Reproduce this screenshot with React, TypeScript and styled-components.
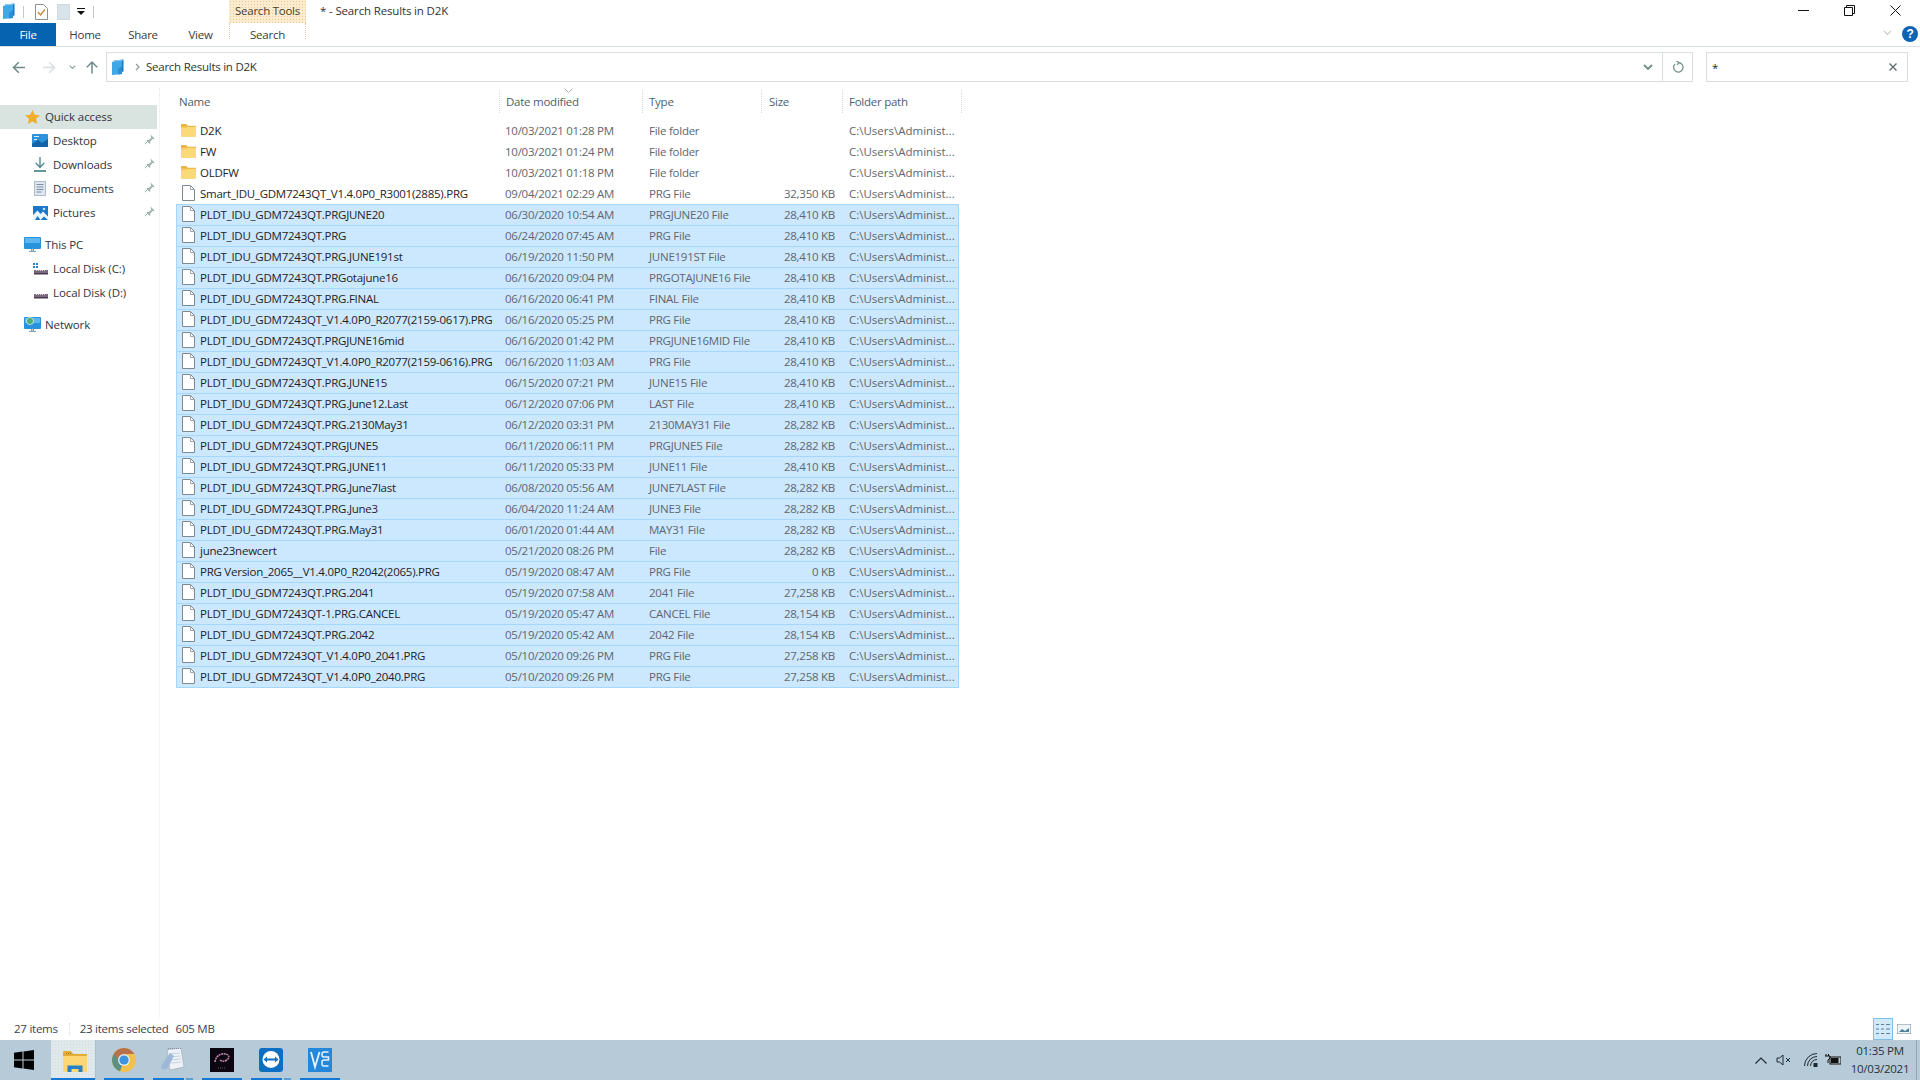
import React from 'react';
import styled, { createGlobalStyle } from 'styled-components';

const Global = createGlobalStyle`
  html, body { margin: 0; padding: 0; height: 100%; background: #fff; overflow: hidden; }
  #root { height: 100%; }
  * { box-sizing: border-box; }
`;

const Page = styled.div`
  width: 1920px; height: 1080px; display: flex; flex-direction: column;
  font-family: "Open Sans", "Noto Sans", sans-serif; font-size: 11.5px; color: #2a2a2a; background: #fff;
  letter-spacing: -0.25px;
`;
const TitleBar = styled.div`display: flex; align-items: stretch; height: 23px;`;
const QuickBar = styled.div`width: 229px; display: flex; align-items: center; padding-left: 2px;`;
const QuickSlot = styled.span<{ $w: number }>`width: ${p => p.$w}px; display: flex; justify-content: center; align-items: center; flex: none;`;
const QuickSep = styled.span<{ $l: number; $r: number }>`width: 1px; height: 12px; background: #c4c8ca; flex: none; margin: 0 ${p => p.$r}px 0 ${p => p.$l}px;`;
const ContextLabel = styled.div`
  width: 77px; display: flex; align-items: center; justify-content: center; color: #4a4030; padding-bottom: 3px;
  background: #fbeccf; background-image: radial-gradient(#eac88f 0.7px, transparent 0.8px); background-size: 3px 3px;
`;
const WindowTitle = styled.div`flex: 1; padding-left: 14px; display: flex; align-items: center; padding-bottom: 2px; color: #333; letter-spacing: -0.15px;`;
const WinControls = styled.div`display: flex; padding-right: 2px;`;
const WinBtn = styled.span`width: 46px; display: flex; align-items: center; justify-content: center; padding-bottom: 3px;`;

const Ribbon = styled.div`display: flex; height: 24px; border-bottom: 1px solid #d9e1e3; align-items: stretch;`;
const FileTab = styled.div`width: 56px; height: 23px; background: #0563b0; color: #fff; display: flex; align-items: center; justify-content: center;`;
const RibbonTab = styled.div<{ $w: number }>`width: ${p => p.$w}px; height: 23px; display: flex; align-items: center; justify-content: center; color: #3b3b3b;`;
const SearchTab = styled(RibbonTab)`height: 16px; padding-top: 6px; border-left: 1px dotted #d8c8a8; border-right: 1px dotted #d8c8a8;`;
const RibbonFill = styled.div`flex: 1; display: flex; align-items: center; justify-content: flex-end; padding-right: 2px; gap: 10px; margin-top: -2px;`;

const NavRow = styled.div`display: flex; height: 41px; align-items: center; padding-right: 12px; padding-bottom: 1px;`;
const NavBtns = styled.div`width: 106px; display: flex; align-items: center; flex: none;`;
const NavSlot = styled.span<{ $w: number }>`width: ${p => p.$w}px; display: flex; justify-content: center; flex: none;`;
const AddressBox = styled.div`flex: 1; height: 30px; border: 1px solid #d9dfe0; display: flex; align-items: center; margin-right: 13px;`;
const AddressIcon = styled.span`width: 21px; display: flex; justify-content: center; flex: none;`;
const Crumb = styled.span`width: 18px; display: flex; justify-content: center; flex: none;`;
const AddressText = styled.span`flex: 1; padding-bottom: 1px; color: #333;`;
const AddressEnd = styled.span`width: 28px; height: 100%; display: flex; align-items: center; justify-content: center; flex: none;`;
const RefreshBtn = styled(AddressEnd)`width: 30px; border-left: 1px solid #d9dfe0;`;
const SearchBox = styled.div`width: 202px; height: 30px; border: 1px solid #d9dfe0; display: flex; align-items: center; justify-content: space-between; padding: 0 10px 0 5px; flex: none;`;

const Body = styled.div`flex: 1; display: flex; min-height: 0;`;
const Sidebar = styled.nav`width: 160px; flex: none; padding-top: 17px; padding-right: 2px; border-right: 1px dotted #e6e8ea; letter-spacing: -0.1px;`;
const NavItem = styled.div<{ $indent: number; $active?: boolean; $gap?: number }>`
  height: 24px; display: flex; align-items: center; padding-left: ${p => p.$indent}px; padding-bottom: 1px; position: relative;
  background: ${p => (p.$active ? '#d9e3e0' : 'transparent')}; margin-top: ${p => p.$gap ?? 0}px; color: #30343a;
`;
const NavIcon = styled.span`width: 20px; margin-right: 3px; display: flex; justify-content: center; flex: none;`;
const PinMark = styled.span`position: absolute; right: 2px; top: 5px; display: flex;`;

const List = styled.main`flex: 1; padding-left: 16px; padding-top: 2px;`;
const HeaderRow = styled.div`display: grid; grid-template-columns: 324px 143px 119px 81px 119px; width: 786px; height: 23px; margin-bottom: 7px;`;
const HeaderCell = styled.div`display: flex; align-items: center; padding-left: 6px; color: #4c6070; border-right: 1px dotted #d4d8dc; position: relative; padding-bottom: 1px;`;
const NameHead = styled(HeaderCell)`padding-left: 3px;`;
const SizeHead = styled(HeaderCell)`padding-left: 7px;`;
const SortArrow = styled.span`position: absolute; top: -2px; left: 64px; display: flex;`;
const Row = styled.div<{ $selected?: boolean }>`
  display: grid; grid-template-columns: 324px 143px 119px 81px 114px; width: 783px; height: 22px; margin-bottom: -1px;
  border: 1px solid ${p => (p.$selected ? '#a5d6fc' : 'transparent')}; padding-bottom: 2px;
  background: ${p => (p.$selected ? '#cce8ff' : 'transparent')}; align-items: center; color: #5f666e;
`;
const NameCell = styled.div`display: flex; align-items: center; color: #1e2228; padding-left: 4px; white-space: nowrap;`;
const RowIcon = styled.span`width: 15px; margin-right: 4px; display: flex; justify-content: center; flex: none;`;
const Cell = styled.div`padding-left: 5px; white-space: nowrap; overflow: hidden;`;
const DateCell = styled(Cell)`padding-left: 4px;`;
const PathCell = styled(Cell)`letter-spacing: 0;`;
const SizeCell = styled.div`text-align: right; padding-right: 9px; white-space: nowrap;`;

const StatusBar = styled.footer`height: 22px; display: flex; align-items: center; padding-left: 14px; color: #3a4250; flex: none;`;
const StatusPart = styled.span`display: inline-block; padding-bottom: 2px;`;
const StatusSize = styled(StatusPart)`margin-left: 7px;`;
const StatusDivider = styled.span`width: 1px; height: 12px; border-left: 1px dotted #d8dce0; margin: 0 10px 0 11px;`;
const ViewToggles = styled.div`margin-left: auto; display: flex; align-items: stretch; height: 22px; padding-right: 6px; gap: 1px;`;
const ViewBtn = styled.span<{ $on?: boolean }>`
  width: 20px; display: flex; align-items: center; justify-content: center;
  background: ${p => (p.$on ? '#d3e9f8' : 'transparent')}; border: 1px solid ${p => (p.$on ? '#7fc0ea' : 'transparent')};
`;

const Taskbar = styled.div`height: 40px; flex: none; background: #b6cbd7; display: flex; align-items: stretch;`;
const StartBtn = styled.div`width: 51px; display: flex; align-items: center; justify-content: center; padding-right: 3px;`;
const ActiveTask = styled.div`
  width: 45px; margin-right: 8px; display: flex; align-items: center; justify-content: center; position: relative; padding-left: 3px; padding-top: 3px;
  background: #dfe9ec; background-image: radial-gradient(#cfdde2 0.7px, transparent 0.8px); background-size: 3px 3px;
  border-right: 1px solid #aebfc8;
`;
const TaskBtn = styled.div`width: 40px; margin-right: 9px; display: flex; align-items: center; justify-content: center; position: relative;`;
const TaskLine = styled.span<{ $split?: boolean }>`
  position: absolute; left: 0; right: 0; bottom: 0; height: 2px;
  background: ${p => (p.$split ? 'linear-gradient(90deg,#1378d6 0 78%,#b6cbd7 78% 82%,#5a9fd8 82%)' : '#1378d6')};
`;
const Tray = styled.div`margin-left: auto; display: flex; align-items: center; padding-right: 3px;`;
const TraySlot = styled.span<{ $w: number }>`width: ${p => p.$w}px; display: flex; justify-content: center; flex: none;`;
const Clock = styled.div`width: 68px; margin-left: 3px; text-align: center; line-height: 18px; color: #27323c; font-size: 11.5px;`;
const ShowDesktop = styled.span`width: 1px; align-self: stretch; background: #8fa6b3; margin-left: 2px;`;

const Library = ({ s = 16 }: { s?: number }) => (
  <svg width={s} height={s * 1.15} viewBox="0 0 14 16">
    <path d="M3 1.5 12.5.5v12L3 15z" fill="#1679c6" />
    <path d="M1 3 11 1.8V15L1 16z" fill="#3fa9e8" />
    <path d="M1 3 3 1.5 12.5.5 11 1.8z" fill="#8ed0f3" />
    <path d="M7 10l4-3v8l-4 .4z" fill="#2a8fd6" />
  </svg>
);
const Folder = () => (
  <svg width="16" height="14" viewBox="0 0 16 14">
    <path d="M0 1.5C0 1 .4.7 1 .7h4.4l1.8 1.8H15c.5 0 1 .4 1 1V13c0 .5-.4 1-1 1H1c-.5 0-1-.4-1-1z" fill="#e8b33e" />
    <path d="M0 3.6h16V13c0 .6-.4 1-1 1H1c-.6 0-1-.4-1-1z" fill="#fbd977" />
    <path d="M0 3.6h6.7L5.6 5H0z" fill="#f5c95b" />
  </svg>
);
const FileIcon = () => (
  <svg width="13" height="16" viewBox="0 0 13 16">
    <path d="M.5.5h8l4 4v11H.5z" fill="#fff" stroke="#7f8a90" />
    <path d="M8.5.5v4h4" fill="none" stroke="#9aa4aa" />
  </svg>
);
const Star = () => (
  <svg width="15" height="14" viewBox="0 0 15 14"><path d="M7.5 0l2.2 4.7 5.3.6-3.9 3.5 1 5.2-4.6-2.6L2.9 14l1-5.2L0 5.3l5.3-.6z" fill="#f1ae2c" /></svg>
);
const DesktopIcon = () => (
  <svg width="16" height="13" viewBox="0 0 16 13">
    <rect x="0" y="0" width="16" height="13" rx="1" fill="#2f93dc" />
    <path d="M0 10 6 6l4 3 6-4v7a1 1 0 0 1-1 1H1a1 1 0 0 1-1-1z" fill="#1363a8" />
    <path d="M2 2h5v1H2zM2 5h3v1H2z" fill="#d9f0ff" />
  </svg>
);
const DownloadIcon = () => (
  <svg width="14" height="15" viewBox="0 0 14 15" fill="none" stroke="#4f8a90" strokeWidth="1.4">
    <path d="M7 0v10M2.8 6 7 10.4 11.2 6" />
    <path d="M1 14h12" stroke="#3f7d88" strokeWidth="1.6" />
  </svg>
);
const DocsIcon = () => (
  <svg width="12" height="15" viewBox="0 0 12 15">
    <rect width="12" height="15" fill="#aebccd" />
    <rect x="1" y="1" width="10" height="13" fill="#dfe6ee" />
    <path d="M2.5 3.5h7M2.5 6h7M2.5 8.5h7M2.5 11h5" stroke="#7d8fa6" />
  </svg>
);
const PicturesIcon = () => (
  <svg width="15" height="14" viewBox="0 0 15 14">
    <rect width="15" height="14" fill="#1a76c9" />
    <path d="M0 14V9l4.5-4.500L7.500 8 10 5.500 15 10.500V14L11 10.500 7.500 14 4.500 10 2 14z" fill="#eaf4fb" />
    <circle cx="11" cy="3" r="1.3" fill="#bfe3fa" />
  </svg>
);
const PcIcon = ({ net }: { net?: boolean }) => (
  <svg width="17" height="16" viewBox="0 0 17 16">
    <rect x="0" y="0" width="17" height="12" rx="1" fill="#2a93dd" />
    <rect x="1" y="1" width="15" height="5" fill="#5cb7ee" />
    <path d="M7.5 12h2v2h-2zM5 14.5h7" stroke="#8aa0ad" fill="none" />
    {net && <circle cx="6" cy="4" r="3.6" fill="#4fae7a" stroke="#e8f3f8" strokeWidth=".7" />}
  </svg>
);
const DiskIcon = ({ win }: { win?: boolean }) => (
  <svg width="15" height="12" viewBox="0 0 15 12">
    {win && <path d="M0 0h2v2H0zM3 0h2v2H3zM0 3h2v2H0zM3 3h2v2H3z" fill="#1f84d6" />}
    <rect x="1" y="7" width="14" height="3.5" fill="#7b6a7e" />
    <rect x="1" y="10" width="14" height="1.5" fill="#4b3a52" />
    <path d="M3 7.5h9" stroke="#d8cfdb" strokeDasharray="1 1" />
  </svg>
);
const Pin = () => (
  <svg width="11" height="11" viewBox="0 0 11 11" fill="#9fb2ac">
    <path d="M6.5.5l4 4-1 .8-.9-.3-2.4 2.4.1 1.6-.8.8L2.5 6.800l.8-.8 1.6.1L7.300 3.700 7 2.800z" />
    <path d="M3.700 7.300.8 10.200" stroke="#9fb2ac" />
  </svg>
);
const Chevron = ({ w = 9, c = '#6f9088', sw = 1.6 }: { w?: number; c?: string; sw?: number }) => (
  <svg width={w} height={w * 0.7} viewBox="0 0 10 7" fill="none" stroke={c} strokeWidth={sw}><path d="M1 1l4 4 4-4" /></svg>
);
const ArrowSvg = styled.svg<{ $deg: number }>`transform: rotate(${p => p.$deg}deg);`;
const Arrow = ({ deg, c }: { deg: number; c: string }) => (
  <ArrowSvg $deg={deg} width="14" height="13" viewBox="0 0 14 13" fill="none" stroke={c} strokeWidth="1.5">
    <path d="M13 6.5H1.500M6.800 1.300 1.500 6.500l5.300 5.200" />
  </ArrowSvg>
);
const ExplorerIcon = () => (
  <svg width="24" height="21" viewBox="0 0 24 21">
    <path d="M0 1.500C0 .7.5 0 1.300 0h6.500l2.500 3H24v3H0z" fill="#e3ad35" />
    <path d="M3 2.500h6" stroke="#9e7420" strokeDasharray="1 1" />
    <path d="M0 5h24v15a1 1 0 0 1-1 1H1a1 1 0 0 1-1-1z" fill="#fcd773" />
    <path d="M4.500 21v-6.500h15V21h-4v-3h-7v3z" fill="#2a7fc9" />
  </svg>
);
const ChromeIcon = () => (
  <svg width="24" height="24" viewBox="0 0 24 24">
    <circle cx="12" cy="12" r="12" fill="#f1c04d" />
    <path d="M12 12 1.600 6A12 12 0 0 0 8 23.300z" fill="#5d8e82" />
    <path d="M12 0A12 12 0 0 0 1.600 6L7 12l5-6h10.400A12 12 0 0 0 12 0z" fill="#b9714d" />
    <circle cx="12" cy="12" r="6" fill="#dfe9ec" />
    <circle cx="12" cy="12" r="4.600" fill="#3f92dd" />
  </svg>
);
const NotepadIcon = () => (
  <svg width="24" height="24" viewBox="0 0 24 24">
    <path d="M6 1l14-1 3 19-14 3z" fill="#eef2f7" stroke="#9aa6b5" strokeWidth=".6" />
    <path d="M7 1l13-1" stroke="#7e8ea3" strokeWidth="1.5" strokeDasharray="1 1" />
    <path d="M8 6l11-1M8.500 9l11-1M9 12l11-1M9.500 15l11-1" stroke="#c5d2e2" />
    <path d="M0 18 9 5l4 3-7 13-5 .5z" fill="#9db8d8" />
  </svg>
);
const PuttyLike = () => (
  <svg width="24" height="24" viewBox="0 0 24 24">
    <rect width="24" height="24" fill="#0c0610" />
    <path d="M5 14C6 6 14 4 18 7c2 2 0 5-3 6-2 .5-4 0-5-1" fill="none" stroke="#c98ab2" strokeWidth="1.5" strokeDasharray="2 .6" />
    <path d="M8 20h8" stroke="#6d4a70" strokeDasharray="1 1" />
  </svg>
);
const TeamViewerIcon = () => (
  <svg width="24" height="24" viewBox="0 0 24 24">
    <rect width="24" height="24" rx="3" fill="#0d6fc4" />
    <circle cx="12" cy="11.5" r="8.5" fill="#fff" />
    <path d="M4.500 11.500l3.500-3v2h8v-2l3.500 3-3.500 3v-2H8v2z" fill="#0d6fc4" />
  </svg>
);
const VncIcon = () => (
  <svg width="24" height="24" viewBox="0 0 24 24">
    <rect width="24" height="24" fill="#2587d9" />
    <path d="M3 4l4 15 4.500-15" fill="none" stroke="#e8f4fd" strokeWidth="1.8" />
    <path d="M20.500 4H16a2 2 0 0 0-2 2v1a2 2 0 0 0 2 2h4.500v3H16a2 2 0 0 0-2 2v2a2 2 0 0 0 2 2h4.500" fill="none" stroke="#e8f4fd" strokeWidth="1.5" />
  </svg>
);
const WindowsLogo = () => (
  <svg width="20" height="20" viewBox="0 0 20 20" fill="#000">
    <path d="M0 2.800 8.500 1.600v8H0zM9.500 1.500 20 0v9.600H9.500zM0 10.500h8.500v8L0 17.200zM9.500 10.500H20V20L9.500 18.500z" />
  </svg>
);

type F = { n: string; d: string; t: string; s: string; k?: 'folder'; sel?: boolean };
const B = 'PLDT_IDU_GDM7243QT';
const sel = (n: string, d: string, t: string, s: string): F => ({ n, d, t, s, sel: true });
const files: F[] = [
  { n: 'D2K', d: '10/03/2021 01:28 PM', t: 'File folder', s: '', k: 'folder' },
  { n: 'FW', d: '10/03/2021 01:24 PM', t: 'File folder', s: '', k: 'folder' },
  { n: 'OLDFW', d: '10/03/2021 01:18 PM', t: 'File folder', s: '', k: 'folder' },
  { n: 'Smart_IDU_GDM7243QT_V1.4.0P0_R3001(2885).PRG', d: '09/04/2021 02:29 AM', t: 'PRG File', s: '32,350 KB' },
  sel(`${B}.PRGJUNE20`, '06/30/2020 10:54 AM', 'PRGJUNE20 File', '28,410 KB'),
  sel(`${B}.PRG`, '06/24/2020 07:45 AM', 'PRG File', '28,410 KB'),
  sel(`${B}.PRG.JUNE191st`, '06/19/2020 11:50 PM', 'JUNE191ST File', '28,410 KB'),
  sel(`${B}.PRGotajune16`, '06/16/2020 09:04 PM', 'PRGOTAJUNE16 File', '28,410 KB'),
  sel(`${B}.PRG.FINAL`, '06/16/2020 06:41 PM', 'FINAL File', '28,410 KB'),
  sel(`${B}_V1.4.0P0_R2077(2159-0617).PRG`, '06/16/2020 05:25 PM', 'PRG File', '28,410 KB'),
  sel(`${B}.PRGJUNE16mid`, '06/16/2020 01:42 PM', 'PRGJUNE16MID File', '28,410 KB'),
  sel(`${B}_V1.4.0P0_R2077(2159-0616).PRG`, '06/16/2020 11:03 AM', 'PRG File', '28,410 KB'),
  sel(`${B}.PRG.JUNE15`, '06/15/2020 07:21 PM', 'JUNE15 File', '28,410 KB'),
  sel(`${B}.PRG.June12.Last`, '06/12/2020 07:06 PM', 'LAST File', '28,410 KB'),
  sel(`${B}.PRG.2130May31`, '06/12/2020 03:31 PM', '2130MAY31 File', '28,282 KB'),
  sel(`${B}.PRGJUNE5`, '06/11/2020 06:11 PM', 'PRGJUNE5 File', '28,282 KB'),
  sel(`${B}.PRG.JUNE11`, '06/11/2020 05:33 PM', 'JUNE11 File', '28,410 KB'),
  sel(`${B}.PRG.June7last`, '06/08/2020 05:56 AM', 'JUNE7LAST File', '28,282 KB'),
  sel(`${B}.PRG.June3`, '06/04/2020 11:24 AM', 'JUNE3 File', '28,282 KB'),
  sel(`${B}.PRG.May31`, '06/01/2020 01:44 AM', 'MAY31 File', '28,282 KB'),
  sel('june23newcert', '05/21/2020 08:26 PM', 'File', '28,282 KB'),
  sel('PRG Version_2065__V1.4.0P0_R2042(2065).PRG', '05/19/2020 08:47 AM', 'PRG File', '0 KB'),
  sel(`${B}.PRG.2041`, '05/19/2020 07:58 AM', '2041 File', '27,258 KB'),
  sel(`${B}-1.PRG.CANCEL`, '05/19/2020 05:47 AM', 'CANCEL File', '28,154 KB'),
  sel(`${B}.PRG.2042`, '05/19/2020 05:42 AM', '2042 File', '28,154 KB'),
  sel(`${B}_V1.4.0P0_2041.PRG`, '05/10/2020 09:26 PM', 'PRG File', '27,258 KB'),
  sel(`${B}_V1.4.0P0_2040.PRG`, '05/10/2020 09:26 PM', 'PRG File', '27,258 KB'),
];

const navTop = [
  { l: 'Desktop', i: <DesktopIcon /> },
  { l: 'Downloads', i: <DownloadIcon /> },
  { l: 'Documents', i: <DocsIcon /> },
  { l: 'Pictures', i: <PicturesIcon /> },
];

export default function App() {
  return (
    <Page>
      <Global />
      <TitleBar>
        <QuickBar>
          <Library s={14} />
          <QuickSep $l={7} $r={6} />
          <QuickSlot $w={22}>
            <svg width="13" height="16" viewBox="0 0 13 16">
              <path d="M.5.5h8l4 4v11H.5z" fill="#fff" stroke="#8a9296" />
              <path d="M3 8l2.5 3L10 5.500" fill="none" stroke="#c58a3a" strokeWidth="1.4" />
            </svg>
          </QuickSlot>
          <QuickSlot $w={22}>
            <svg width="13" height="16" viewBox="0 0 13 16"><rect width="13" height="16" fill="#d9e4ea" stroke="#c6d2d8" /></svg>
          </QuickSlot>
          <QuickSlot $w={14}>
            <svg width="8" height="7" viewBox="0 0 8 7"><path d="M0 0h8v1H0zM0 3h8L4 7z" fill="#111" /></svg>
          </QuickSlot>
          <QuickSep $l={5} $r={0} />
        </QuickBar>
        <ContextLabel>Search Tools</ContextLabel>
        <WindowTitle>* - Search Results in D2K</WindowTitle>
        <WinControls>
          <WinBtn><svg width="11" height="11" viewBox="0 0 11 11"><path d="M0 5.5h11" stroke="#111" /></svg></WinBtn>
          <WinBtn><svg width="11" height="11" viewBox="0 0 11 11" fill="none" stroke="#111"><path d="M.5 2.500h8v8h-8zM2.500 2.500v-2h8v8h-2" /></svg></WinBtn>
          <WinBtn><svg width="11" height="11" viewBox="0 0 11 11" stroke="#111"><path d="M.5.5l10 10M10.500.5l-10 10" /></svg></WinBtn>
        </WinControls>
      </TitleBar>
      <Ribbon>
        <FileTab>File</FileTab>
        <RibbonTab $w={58}>Home</RibbonTab>
        <RibbonTab $w={58}>Share</RibbonTab>
        <RibbonTab $w={57}>View</RibbonTab>
        <SearchTab $w={77}>Search</SearchTab>
        <RibbonFill>
          <Chevron w={9} c="#c4c9cc" sw={1.2} />
          <svg width="16" height="16" viewBox="0 0 16 16">
            <circle cx="8" cy="8" r="8" fill="#0f63b5" />
            <text x="8" y="12" textAnchor="middle" fontSize="12" fontWeight="700" fill="#fff" fontFamily="Liberation Sans, sans-serif">?</text>
          </svg>
        </RibbonFill>
      </Ribbon>
      <NavRow>
        <NavBtns>
          <NavSlot $w={38}><Arrow deg={0} c="#6d8a8a" /></NavSlot>
          <NavSlot $w={22}><Arrow deg={180} c="#d8dfe0" /></NavSlot>
          <NavSlot $w={24}><Chevron w={7} c="#8ca5a5" /></NavSlot>
          <NavSlot $w={16}><Arrow deg={90} c="#6d8a8a" /></NavSlot>
        </NavBtns>
        <AddressBox>
          <AddressIcon><Library s={14} /></AddressIcon>
          <Crumb><svg width="5" height="8" viewBox="0 0 5 8" fill="none" stroke="#8a9a9a" strokeWidth="1.2"><path d="M1 1l3 3-3 3" /></svg></Crumb>
          <AddressText>Search Results in D2K</AddressText>
          <AddressEnd><Chevron w={10} c="#6f9088" sw={1.8} /></AddressEnd>
          <RefreshBtn>
            <svg width="12" height="12" viewBox="0 0 12 12" fill="none" stroke="#76958e" strokeWidth="1.3">
              <path d="M7 1.700A4.700 4.700 0 1 1 3 3" /><path d="M4.500 0 7.300 1.700 5 3.800" />
            </svg>
          </RefreshBtn>
        </AddressBox>
        <SearchBox>
          <span>*</span>
          <svg width="8" height="8" viewBox="0 0 8 8" stroke="#5d6f6f" strokeWidth="1.4"><path d="M.5.5l7 7M7.500.5l-7 7" /></svg>
        </SearchBox>
      </NavRow>
      <Body>
        <Sidebar>
          <NavItem $indent={22} $active><NavIcon><Star /></NavIcon>Quick access</NavItem>
          {navTop.map(n => (
            <NavItem key={n.l} $indent={30}><NavIcon>{n.i}</NavIcon>{n.l}<PinMark><Pin /></PinMark></NavItem>
          ))}
          <NavItem $indent={22} $gap={8}><NavIcon><PcIcon /></NavIcon>This PC</NavItem>
          <NavItem $indent={30}><NavIcon><DiskIcon win /></NavIcon>Local Disk (C:)</NavItem>
          <NavItem $indent={30}><NavIcon><DiskIcon /></NavIcon>Local Disk (D:)</NavItem>
          <NavItem $indent={22} $gap={8}><NavIcon><PcIcon net /></NavIcon>Network</NavItem>
        </Sidebar>
        <List>
          <HeaderRow>
            <NameHead>Name</NameHead>
            <HeaderCell>
              <SortArrow><svg width="9" height="5" viewBox="0 0 9 5" fill="none" stroke="#a4b0b8"><path d="M.5.5l4 4 4-4" /></svg></SortArrow>
              Date modified
            </HeaderCell>
            <HeaderCell>Type</HeaderCell>
            <SizeHead>Size</SizeHead>
            <HeaderCell>Folder path</HeaderCell>
          </HeaderRow>
          {files.map(f => (
            <Row key={f.n} $selected={f.sel}>
              <NameCell><RowIcon>{f.k === 'folder' ? <Folder /> : <FileIcon />}</RowIcon>{f.n}</NameCell>
              <DateCell>{f.d}</DateCell>
              <Cell>{f.t}</Cell>
              <SizeCell>{f.s}</SizeCell>
              <PathCell>C:\Users\Administ...</PathCell>
            </Row>
          ))}
        </List>
      </Body>
      <StatusBar>
        <StatusPart>27 items</StatusPart>
        <StatusDivider />
        <StatusPart>23 items selected</StatusPart>
        <StatusSize>605 MB</StatusSize>
        <ViewToggles>
          <ViewBtn $on>
            <svg width="14" height="14" viewBox="0 0 14 14" stroke="#5f7f95"><path d="M0 2.500h3M0 7h3M0 11.500h3M5 2.500h3M5 7h3M5 11.500h3M10 2.500h4M10 7h4M10 11.500h4" /></svg>
          </ViewBtn>
          <ViewBtn>
            <svg width="14" height="10" viewBox="0 0 14 10"><rect width="14" height="10" fill="#eef3f6" stroke="#7b8f9c" /><path d="M2 8l3-3 3 2 4-3v4z" fill="#4f7f9f" /></svg>
          </ViewBtn>
        </ViewToggles>
      </StatusBar>
      <Taskbar>
        <StartBtn><WindowsLogo /></StartBtn>
        <ActiveTask><ExplorerIcon /><TaskLine /></ActiveTask>
        <TaskBtn><ChromeIcon /><TaskLine /></TaskBtn>
        <TaskBtn><NotepadIcon /><TaskLine $split /></TaskBtn>
        <TaskBtn><PuttyLike /><TaskLine /></TaskBtn>
        <TaskBtn><TeamViewerIcon /><TaskLine $split /></TaskBtn>
        <TaskBtn><VncIcon /><TaskLine /></TaskBtn>
        <Tray>
          <TraySlot $w={12}><svg width="12" height="7" viewBox="0 0 12 7" fill="none" stroke="#1c2a33" strokeWidth="1.2"><path d="M.5 6.500 6 1l5.500 5.500" /></svg></TraySlot>
          <TraySlot $w={32}>
            <svg width="15" height="12" viewBox="0 0 15 12" fill="none" stroke="#1c2a33"><path d="M1 4v4h2.500L7 11V1L3.500 4z" /><path d="M10 4l4 4M14 4l-4 4" /></svg>
          </TraySlot>
          <TraySlot $w={24}>
            <svg width="14" height="14" viewBox="0 0 14 14" fill="none" stroke="#1c2a33"><path d="M.5 13A12.500 12.500 0 0 1 13 .5M3.500 13A9.500 9.500 0 0 1 13 3.500M6.500 13A6.500 6.500 0 0 1 13 6.500" /><rect x="9.500" y="10" width="4" height="4" fill="#1c2a33" stroke="none" /></svg>
          </TraySlot>
          <TraySlot $w={20}>
            <svg width="16" height="12" viewBox="0 0 16 12"><rect x="5" y="3" width="11" height="7" fill="none" stroke="#111" /><rect x="6" y="4" width="7.500" height="5" fill="#111" /><path d="M1 0v2M3.500 0v2M0 2h5v2L3 6v3" fill="none" stroke="#111" /></svg>
          </TraySlot>
          <Clock>01:35 PM<br />10/03/2021</Clock>
          <ShowDesktop />
        </Tray>
      </Taskbar>
    </Page>
  );
}
